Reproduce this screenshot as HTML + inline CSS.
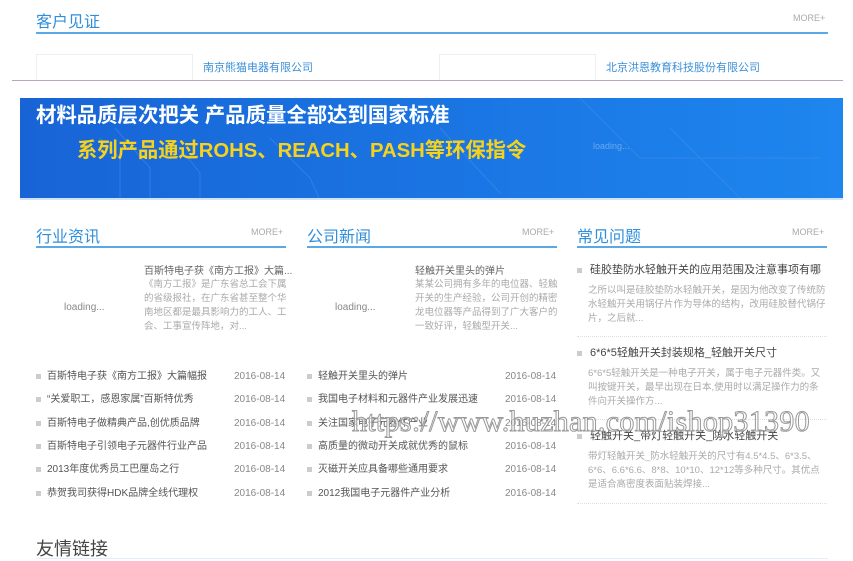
<!DOCTYPE html>
<html><head><meta charset="utf-8">
<style>
*{margin:0;padding:0;box-sizing:border-box}
body{width:853px;height:560px;overflow:hidden;background:#fff;position:relative;font-family:"Liberation Sans","Noto Sans CJK SC",sans-serif;color:#555}
.a{position:absolute;white-space:nowrap}
.t{font-size:16px;color:#2f8fdc}
.more{font-size:9px;color:#aaa}
.ln{position:absolute;height:2px;background:#5aa9e6}
.li{font-size:10px;color:#555;line-height:14px}
.li:before{content:"";display:inline-block;width:5px;height:5px;background:#ccc;margin-right:6px;vertical-align:middle}
.d{font-size:10px;color:#888;line-height:14px}
.p{font-size:9.5px;color:#aaa;line-height:14px;white-space:normal}
.q{font-size:11px;color:#444;line-height:14px}
.q:before{content:"";display:inline-block;width:5px;height:5px;background:#ccc;margin-right:8px;vertical-align:middle}
.dot{position:absolute;border-top:1px dotted #ddd;height:0}
</style></head><body>
<div class="a t" style="left:36px;top:8px">客户见证</div>
<div class="a more" style="left:793px;top:13px">MORE+</div>
<div class="ln" style="left:36px;top:32px;width:792px;height:1.5px"></div>
<div class="a" style="left:36px;top:54px;width:157px;height:27px;border:1px solid #eee;border-bottom:none"></div>
<div class="a" style="left:203px;top:59px;font-size:11px;color:#3b8fd8">南京熊猫电器有限公司</div>
<div class="a" style="left:439px;top:54px;width:157px;height:27px;border:1px solid #eee;border-bottom:none"></div>
<div class="a" style="left:606px;top:59px;font-size:11px;color:#3b8fd8">北京洪恩教育科技股份有限公司</div>
<div class="a" style="left:12px;top:80px;width:831px;height:1px;background:#b9a3c8"></div>

<div class="a" style="left:20px;top:98px;width:823px;height:102px;background:linear-gradient(90deg,#1864d6 0%,#1a74e2 50%,#1e86ee 100%);overflow:hidden;border-bottom:2px solid #cfe3f7">
<svg width="823" height="102" style="position:absolute;left:0;top:0" fill="none" stroke="#3f8cea" stroke-width="1" opacity=".6">
<path d="M80 40 L100 60 L100 102 M95 30 L130 70 L130 102 M160 50 L180 75 L180 102 M250 40 L290 80 L300 102 M420 30 L480 95 M560 0 L620 60 L800 60 M650 30 L720 100"/>
</svg>
<div class="a" style="left:16px;top:0px;font-size:20.4px;font-weight:bold;color:#fff">材料品质层次把关 产品质量全部达到国家标准</div>
<div class="a" style="left:57px;top:35px;font-size:20.3px;font-weight:bold;color:#f7d21c">系列产品通过ROHS、REACH、PASH等环保指令</div>
<div class="a" style="left:573px;top:43px;font-size:9px;color:#6aa8ee">loading...</div>
</div>

<!-- col1 -->
<div class="a t" style="left:36px;top:223px">行业资讯</div>
<div class="a more" style="left:251px;top:227px">MORE+</div>
<div class="ln" style="left:36px;top:246px;width:250px"></div>
<div class="a" style="left:64px;top:302px;font-size:10px;color:#888">loading...</div>
<div class="a" style="left:144px;top:262px;font-size:10px;color:#666">百斯特电子获《南方工报》大篇...</div>
<div class="a p" style="left:144px;top:278px;width:146px">《南方工报》是广东省总工会下属的省级报社，在广东省甚至整个华南地区都是最具影响力的工人、工会、工事宣传阵地，对...</div>
<div class="a li" style="left:36px;top:370px">百斯特电子获《南方工报》大篇幅报</div>
<div class="a li" style="left:36px;top:393px">“关爱职工，感恩家属”百斯特优秀</div>
<div class="a li" style="left:36px;top:417px">百斯特电子做精典产品,创优质品牌</div>
<div class="a li" style="left:36px;top:440px">百斯特电子引领电子元器件行业产品</div>
<div class="a li" style="left:36px;top:463px">2013年度优秀员工巴厘岛之行</div>
<div class="a li" style="left:36px;top:487px">恭贺我司获得HDK品牌全线代理权</div>
<div class="a d" style="left:234px;top:370px">2016-08-14</div>
<div class="a d" style="left:234px;top:393px">2016-08-14</div>
<div class="a d" style="left:234px;top:417px">2016-08-14</div>
<div class="a d" style="left:234px;top:440px">2016-08-14</div>
<div class="a d" style="left:234px;top:463px">2016-08-14</div>
<div class="a d" style="left:234px;top:487px">2016-08-14</div>

<!-- col2 -->
<div class="a t" style="left:307px;top:223px">公司新闻</div>
<div class="a more" style="left:522px;top:227px">MORE+</div>
<div class="ln" style="left:307px;top:246px;width:250px"></div>
<div class="a" style="left:335px;top:302px;font-size:10px;color:#888">loading...</div>
<div class="a" style="left:415px;top:262px;font-size:10px;color:#666">轻触开关里头的弹片</div>
<div class="a p" style="left:415px;top:278px;width:146px">某某公司拥有多年的电位器、轻触开关的生产经验，公司开创的精密龙电位器等产品得到了广大客户的一致好评，轻触型开关...</div>
<div class="a li" style="left:307px;top:370px">轻触开关里头的弹片</div>
<div class="a li" style="left:307px;top:393px">我国电子材料和元器件产业发展迅速</div>
<div class="a li" style="left:307px;top:417px">关注国家电子元器件产业</div>
<div class="a li" style="left:307px;top:440px">高质量的微动开关成就优秀的鼠标</div>
<div class="a li" style="left:307px;top:463px">灭磁开关应具备哪些通用要求</div>
<div class="a li" style="left:307px;top:487px">2012我国电子元器件产业分析</div>
<div class="a d" style="left:505px;top:370px">2016-08-14</div>
<div class="a d" style="left:505px;top:393px">2016-08-14</div>
<div class="a d" style="left:505px;top:417px">2016-08-14</div>
<div class="a d" style="left:505px;top:440px">2016-08-14</div>
<div class="a d" style="left:505px;top:463px">2016-08-14</div>
<div class="a d" style="left:505px;top:487px">2016-08-14</div>

<!-- col3 -->
<div class="a t" style="left:577px;top:223px">常见问题</div>
<div class="a more" style="left:792px;top:227px">MORE+</div>
<div class="ln" style="left:577px;top:246px;width:250px"></div>
<div class="a q" style="left:577px;top:263px">硅胶垫防水轻触开关的应用范围及注意事项有哪</div>
<div class="a p" style="left:588px;top:284px;width:240px">之所以叫是硅胶垫防水轻触开关，是因为他改变了传统防水轻触开关用锅仔片作为导体的结构，改用硅胶替代锅仔片，之后就...</div>
<div class="dot" style="left:577px;top:336px;width:250px"></div>
<div class="a q" style="left:577px;top:346px">6*6*5轻触开关封装规格_轻触开关尺寸</div>
<div class="a p" style="left:588px;top:367px;width:240px">6*6*5轻触开关是一种电子开关，属于电子元器件类。又叫按键开关，最早出现在日本,使用时以满足操作力的条件向开关操作方...</div>
<div class="dot" style="left:577px;top:419px;width:250px"></div>
<div class="a q" style="left:577px;top:429px">轻触开关_带灯轻触开关_防水轻触开关</div>
<div class="a p" style="left:588px;top:450px;width:240px">带灯轻触开关_防水轻触开关的尺寸有4.5*4.5、6*3.5、6*6、6.6*6.6、8*8、10*10、12*12等多种尺寸。其优点是适合高密度表面贴装焊接...</div>
<div class="dot" style="left:577px;top:503px;width:250px"></div>

<div class="a" style="left:36px;top:535px;font-size:18px;color:#444">友情链接</div>
<div class="a" style="left:36px;top:558px;width:792px;height:1px;background:#e3eef8"></div>

<div class="a" style="left:352px;top:405px;font-family:'Liberation Serif',serif;font-size:30px;color:rgba(255,255,255,.6);-webkit-text-stroke:1px #999;letter-spacing:0.3px">https://www.huzhan.com/ishop31390</div>
</body></html>
